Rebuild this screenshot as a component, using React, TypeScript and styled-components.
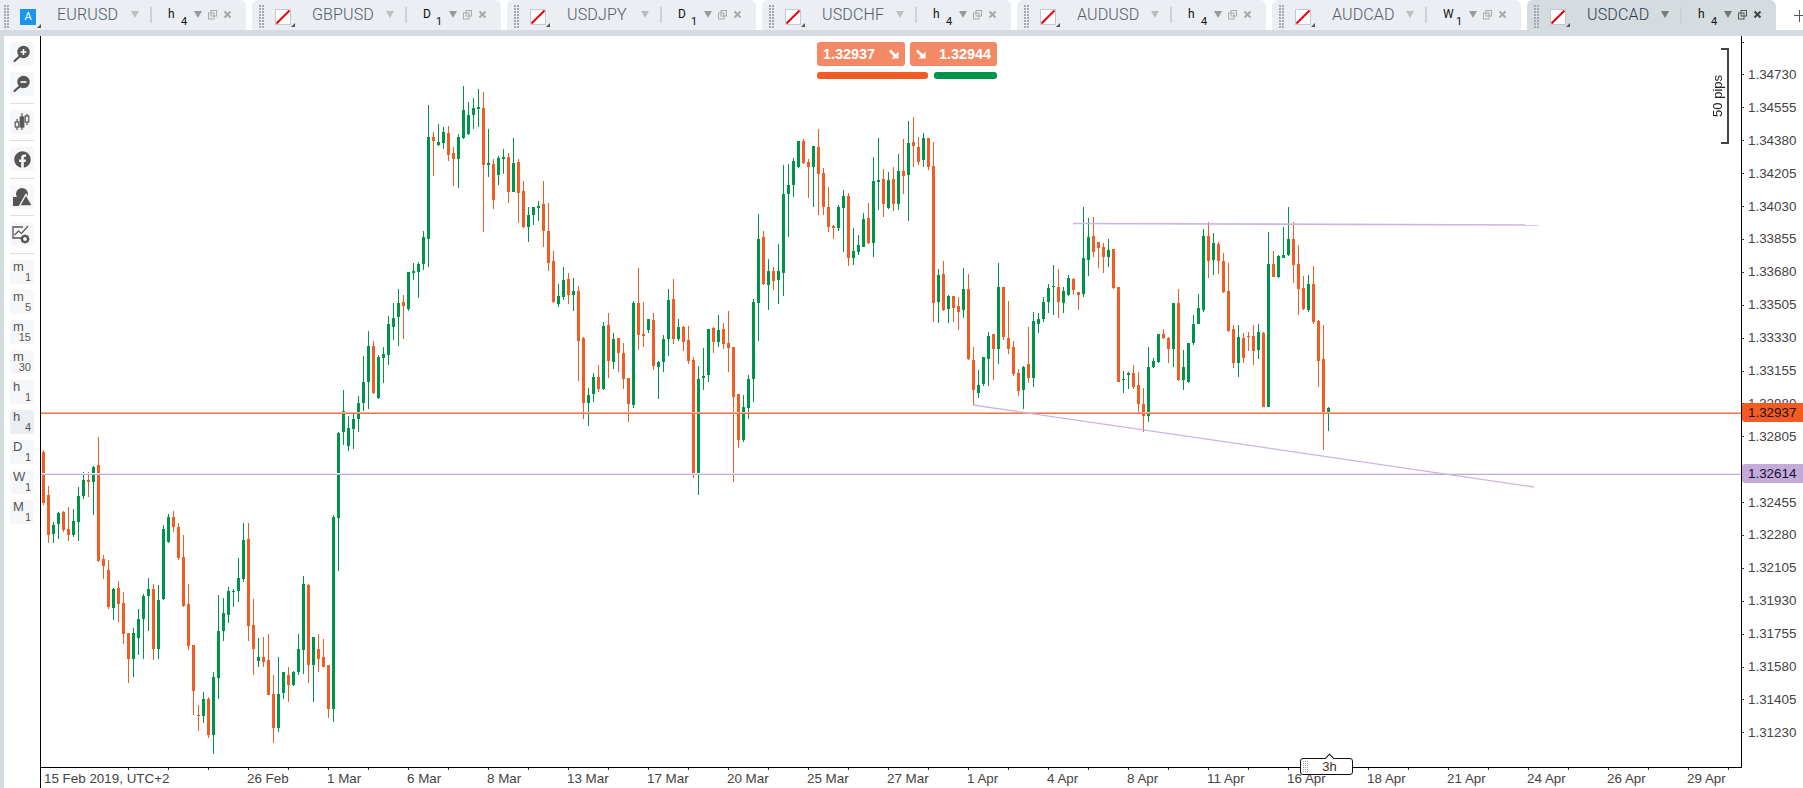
import React from 'react';
import styled, { createGlobalStyle } from 'styled-components';
import { FaFacebook } from 'react-icons/fa';

const BAND = '#d5dce0';
const ORANGE = '#f25c24';
const GREEN = '#00944a';
const AXIS_FONT = `"Liberation Sans", Arial, sans-serif`;

const Global = createGlobalStyle`
  html, body { margin: 0; padding: 0; background: #fff; overflow: hidden; }
  #root { width: 1803px; height: 788px; overflow: hidden; }
`;

const Page = styled.div`
  width: 1803px;
  height: 788px;
  display: flex;
  flex-direction: column;
  overflow: hidden;
  font-family: ${AXIS_FONT};
`;

const TabBar = styled.div`
  height: 30px;
  display: flex;
  gap: 6px;
  margin-left: -3px;
  flex: none;
`;

const Tab = styled.div<{ $active?: boolean }>`
  width: 249px;
  height: 30px;
  flex: none;
  box-sizing: border-box;
  padding-left: 7px;
  display: flex;
  align-items: center;
  border-radius: 6px 6px 0 0;
  background: ${p => (p.$active ? BAND : '#ebeef2')};
`;

const Grip = styled.div`
  width: 5px;
  height: 24px;
  margin-top: 4px;
  background: repeating-linear-gradient(to bottom, #a3a9ae 0 2px, transparent 2px 3px);
  mask: repeating-linear-gradient(90deg, #000 0 2px, transparent 2px 3px);
  -webkit-mask: repeating-linear-gradient(90deg, #000 0 2px, transparent 2px 3px);
`;

const SymbolBox = styled.div<{ $blue?: boolean }>`
  position: relative;
  width: 16px;
  height: 16px;
  margin: 3px 0 0 11px;
  box-sizing: border-box;
  background: ${p => (p.$blue ? '#1a95ec' : '#fff')};
  border: ${p => (p.$blue ? 'none' : '1px solid #c6c9cc')};
  color: #fff;
  font: 11px/16px Roboto, sans-serif;
  text-align: center;
  &::after {
    content: '';
    position: absolute;
    right: -5px;
    bottom: -3px;
    border-style: solid;
    border-width: 0 0 4px 4px;
    border-color: transparent transparent #555 transparent;
  }
`;

const SymbolName = styled.div<{ $active?: boolean }>`
  width: 74px;
  margin-left: 21px;
  font: 300 16px/30px Roboto, sans-serif;
  letter-spacing: 0.15px;
  color: ${p => (p.$active ? '#2f3b4c' : '#505a68')};
  white-space: nowrap;
`;

const Caret = styled.div<{ $shade: string }>`
  flex: none;
  width: 0;
  height: 0;
  margin-top: -1px;
  border-style: solid;
  border-width: 7px 4px 0 4px;
  border-color: ${p => p.$shade} transparent transparent transparent;
`;

const TabDivider = styled.div`
  width: 2px;
  height: 16px;
  margin-left: 11px;
  background: #cfd2d5;
`;

const TfLabel = styled.div`
  position: relative;
  width: 26px;
  height: 30px;
  margin-left: 16px;
  color: #111;
  font: 12px/14px Roboto, sans-serif;
`;

const TfUnit = styled.span`
  position: absolute;
  left: 0;
  top: 7px;
`;

const TfCount = styled.span`
  position: absolute;
  left: 13px;
  top: 15px;
  font-size: 11px;
`;

const TabIcons = styled.svg`
  flex: none;
  margin-left: 6px;
  margin-top: -1px;
`;

const AddTab = styled.div`
  position: absolute;
  left: 1794px;
  top: 10px;
  width: 12px;
  height: 12px;
  background:
    linear-gradient(#555, #555) 0 5px / 100% 1px no-repeat,
    linear-gradient(#555, #555) 5px 0 / 1px 100% no-repeat;
`;

const Band = styled.div`
  height: 6px;
  flex: none;
  background: ${BAND};
`;

const Main = styled.div`
  flex: 1;
  display: flex;
  min-height: 0;
`;

const Sidebar = styled.aside`
  width: 40px;
  flex: none;
  box-sizing: border-box;
  border-left: 4px solid ${BAND};
  padding: 6px 0 0 6px;
  display: flex;
  flex-direction: column;
  gap: 6px;
`;

const ToolButton = styled.div<{ $active?: boolean }>`
  position: relative;
  width: 24px;
  height: 24px;
  flex: none;
  border-radius: 3px;
  background: ${p => (p.$active ? '#eceff1' : '#f6f7f8')};
  display: flex;
  align-items: center;
  justify-content: center;
  color: #555;
`;

const ToolRule = styled.div<{ $push?: boolean }>`
  width: 24px;
  height: 1px;
  flex: none;
  margin-top: ${p => (p.$push ? 1 : 0)}px;
  background: #dcdfe1;
`;

const TfUnitSmall = styled.span`
  position: absolute;
  left: 3px;
  top: 1px;
  font: 13px/12px "Liberation Sans", sans-serif;
  color: #555;
`;

const TfCountSmall = styled.span`
  position: absolute;
  right: 3px;
  top: 11px;
  font: 11px/12px "Liberation Sans", sans-serif;
  color: #555;
`;

const Chart = styled.div`
  position: relative;
  flex: none;
  width: 1763px;
  box-sizing: border-box;
  display: grid;
  grid-template-columns: 1700px 62px;
  grid-template-rows: 731px 21px;
  border-left: 1px solid #000;
`;

const Plot = styled.svg`
  display: block;
  grid-column: 1;
  grid-row: 1;
`;

const PriceAxis = styled.div`
  grid-column: 2;
  grid-row: 1;
  position: relative;
  box-sizing: border-box;
  border-left: 1px solid #000;
  overflow: hidden;
  font: 13.4px/16px ${AXIS_FONT};
  color: #444;
  display: flex;
  flex-direction: column;
`;

const PriceList = styled.div`
  margin-top: -10.35px;
  flex: none;
`;

const PriceRow = styled.div`
  height: 32.9px;
  display: flex;
  align-items: center;
  gap: 4px;
  white-space: nowrap;
  &::before {
    content: '';
    width: 2px;
    height: 1px;
    background: #333;
    flex: none;
  }
`;

const PriceTag = styled.div<{ $bg: string; $top: number; $ink: string }>`
  position: absolute;
  left: 0;
  right: 0;
  top: ${p => p.$top}px;
  height: 19px;
  box-sizing: border-box;
  padding-left: 6px;
  border-radius: 3px 0 0 3px;
  background: ${p => p.$bg};
  color: ${p => p.$ink};
  line-height: 19px;
`;

const TimeAxis = styled.div`
  grid-column: 1 / 2;
  grid-row: 2;
  position: relative;
  border-top: 1px solid #000;
  margin-right: -1px;
  display: flex;
  padding-left: 3px;
  font: 13.4px/21px ${AXIS_FONT};
  color: #444;
  white-space: nowrap;
`;

const TimeTicks = styled.div`
  position: absolute;
  left: 87px;
  right: 0;
  top: 0;
  height: 2px;
  background: repeating-linear-gradient(90deg, #333 0 1px, transparent 1px 40px);
`;

const TimeCell = styled.div<{ $first?: boolean }>`
  flex: none;
  width: ${p => (p.$first ? 203 : 80)}px;
  &:last-child {
    width: auto;
  }
`;

const Quote = styled.div`
  position: absolute;
  left: 776px;
  top: 6px;
  width: 180px;
  display: flex;
  flex-direction: column;
  gap: 6px;
`;

const QuoteRow = styled.div`
  display: flex;
  gap: 5px;
`;

const QuoteButton = styled.div`
  flex: 1;
  height: 24px;
  box-sizing: border-box;
  padding: 0 6px;
  border-radius: 3px;
  background: #f48a65;
  color: #fff;
  font: bold 14.4px/24px ${AXIS_FONT};
  display: flex;
  align-items: center;
  justify-content: space-between;
`;

const SpreadRow = styled.div`
  display: flex;
  gap: 6px;
  height: 7px;
`;

const SpreadBar = styled.div<{ $bg: string; $w: number }>`
  width: ${p => p.$w}px;
  border-radius: 3px;
  background: ${p => p.$bg};
`;

const PipRuler = styled.div`
  position: absolute;
  right: 74px;
  top: 13px;
  height: 94px;
  display: flex;
  align-items: center;
`;

const PipText = styled.div`
  writing-mode: vertical-rl;
  transform: rotate(180deg);
  margin-right: -4px;
  font: 13px/14px ${AXIS_FONT};
  color: #222;
`;

const PipBracket = styled.div`
  width: 6px;
  height: 92px;
  border: 2px solid #444;
  border-left: none;
`;

const Timer = styled.div`
  position: absolute;
  left: 1259px;
  top: 722px;
  width: 53px;
  height: 17px;
  box-sizing: border-box;
  padding-left: 6px;
  background: #fff;
  border: 1px solid #111;
  border-radius: 3px;
  font: 13px/15px ${AXIS_FONT};
  color: #4a2a10;
  text-align: center;
  &::before {
    content: '';
    position: absolute;
    left: 25px;
    top: -4px;
    width: 6px;
    height: 6px;
    background: #fff;
    border-left: 1px solid #111;
    border-top: 1px solid #111;
    transform: rotate(45deg);
  }
`;

const TimerGrip = styled.div`
  position: absolute;
  left: 2px;
  top: 2px;
  width: 5px;
  height: 11px;
  background: repeating-linear-gradient(to bottom, #999 0 1px, transparent 1px 2px);
  mask: repeating-linear-gradient(90deg, #000 0 1px, transparent 1px 2px);
  -webkit-mask: repeating-linear-gradient(90deg, #000 0 1px, transparent 1px 2px);
`;

const TimerText = styled.span`
  position: relative;
`;

/* ---------- data ---------- */
type C = [number, number, number, number, number]; // colour (1 orange), high, body top, body bottom, low

const seg1: C[] = [
  [1,90,97,250,255],[1,198,224,344,368],[0,307,314,341,370],[0,275,278,313,358],[1,272,275,331,335],[1,262,327,344,364],
  [0,267,303,344,350],[0,201,227,307,364],[0,156,180,227,238],[1,156,180,185,232],[0,139,140,187,286],[1,50,134,423,427],
  [1,405,417,437,478],[1,420,450,561,566],[0,505,506,563,601],[1,484,504,552,607],[1,517,549,641,673],[1,640,640,716,790],
  [0,625,640,716,772],[0,568,598,653,706],[0,522,528,596,718],[0,475,507,527,634],[1,492,507,686,721],[0,495,541,686,718],
  [0,316,327,538,540],[0,282,291,367,368],[1,273,291,322,337],[1,310,321,414,420],[1,345,411,557,562],[1,492,552,677,690],
  [1,676,676,812,884],[1,855,885,888,932],[0,817,838,887,910],[1,832,838,945,955],[0,755,771,945,1003],[0,525,634,773,838],
  [0,535,579,632,664],[0,502,514,584,610],[0,506,513,517,562],[0,414,475,513,547],[0,309,360,476,487],[1,309,357,617,664],
  [1,538,615,687,764],[0,655,712,722,740],[1,652,712,725,740],[1,643,720,824,826],[1,766,823,923,970],[0,712,823,923,935],
  [0,756,757,818,838],[1,742,765,794,845],[0,752,756,795,797],[0,643,687,755,765],[0,468,492,689,762],[1,492,494,735,790],
  [0,650,651,735,847],[1,643,687,717,757],[1,658,711,740,742],[1,735,735,866,895],[0,285,291,866,907],[0,37,38,295,453],
];
const seg2: C[] = [
  [0,960,1022,1087,1125],[0,1038,1073,1128,1143],[0,1028,1048,1076,1138],[0,977,1000,1048,1086],[0,857,935,999,1024],
  [0,782,829,936,1018],[1,812,829,968,972],[0,855,862,985,988],[0,830,853,864,940],[0,737,763,855,886],[0,698,745,771,810],
  [0,656,700,741,828],[1,674,697,708,806],[0,605,606,718,722],[0,578,604,609,630],[0,575,583,606,684],[0,482,502,582,600],
  [0,106,202,506,590],[1,187,202,213,317],[0,163,217,225,228],[0,172,187,219,236],[1,167,190,254,272],[1,230,250,267,347],
  [0,192,202,266,353],[0,49,120,204,206],[0,95,136,192,194],[0,85,114,135,176],[0,56,111,116,172],[1,65,114,285,485],
  [0,176,280,285,320],[1,268,282,389,416],[0,258,264,315,344],[0,236,262,266,312],[1,248,262,366,398],[0,205,280,366,366],
  [1,268,277,369,458],[1,332,364,470,473],[0,412,436,471,516],[0,412,412,435,464],[0,394,408,414,452],[1,332,403,483,530],
  [1,398,484,579,603],[1,542,574,696,700],[0,641,679,702,710],[0,592,631,681,690],[1,608,628,675,702],[0,624,664,675,722],
  [1,648,664,813,932],[1,800,805,1000,1047],[0,955,974,1000,1068],[0,908,920,973,996],[1,884,922,958,965],[0,756,767,958,960],
  [1,728,764,873,925],[0,788,806,877,897],[1,803,805,850,906],[1,818,848,928,957],[1,925,925,1003,1055],[0,692,700,1005,1014],
  [1,593,700,795,840],[1,695,793,799,832],[0,746,748,781,788],[1,728,749,889,900],[0,873,875,892,987],
];
const seg3: C[] = [
  [0,704,718,787,816],[0,568,601,718,768],[1,536,598,718,733],[0,656,680,716,724],[1,677,680,726,753],[1,677,719,784,792],
  [1,770,779,1121,1135],[0,797,838,1118,1185],[0,745,827,835,871],[0,687,688,825,847],[1,680,685,727,760],[0,646,691,727,742],
  [1,668,687,733,747],[1,634,730,745,816],[1,741,742,892,1147],[1,882,883,1021,1045],[0,885,922,1021,1025],[0,825,838,925,957],
  [0,596,607,837,906],[0,341,418,608,722],[1,394,412,553,556],[0,476,514,555,630],[1,500,514,543,570],[0,431,514,541,612],
  [0,194,283,519,588],[0,193,256,282,410],[0,175,183,256,291],[0,124,124,202,205],[1,118,124,189,192],[1,176,186,201,294],
  [0,137,138,201,320],[1,88,141,222,344],[1,205,219,321,344],[1,260,322,380,396],[1,375,378,384,416],[0,314,322,385,392],
  [0,271,289,323,455],[1,278,289,474,497],[0,385,454,474,494],[0,406,436,457,465],[0,340,358,440,441],[1,310,355,430,431],
  [0,172,244,429,470],[0,115,240,246,329],[1,208,238,312,350],[0,217,241,324,327],[1,202,238,312,332],[0,163,214,312,330],
  [1,118,214,228,281],[0,64,130,224,362],[1,52,127,138,200],[1,110,142,186,195],[0,100,114,180,200],[1,113,115,202,210],
  [1,127,199,608,667],[0,506,526,606,668],[1,484,523,630,632],[0,585,589,627,670],[1,588,589,624,667],[1,592,619,636,690],
  [0,503,566,630,655],[1,523,566,778,780],[1,740,779,871,915],[0,810,854,878,895],[0,770,772,853,857],[0,695,707,777,858],
];
const seg4: C[] = [
  [1,432,433,478,570],[0,218,292,478,522],[1,290,292,442,450],[1,332,443,478,493],[1,452,472,551,558],[1,538,548,604,618],
  [0,528,530,601,658],[1,410,523,565,578],[0,365,392,565,592],[0,370,386,403,430],[0,322,337,388,396],[0,283,295,337,370],
  [0,224,289,291,376],[1,236,290,337,383],[0,290,304,340,370],[0,255,263,316,318],[1,265,266,300,316],[1,305,305,316,360],
  [0,52,205,313,320],[0,85,142,210,258],[1,82,139,186,200],[1,155,156,175,233],[1,158,172,201,250],[0,148,181,201,232],
  [1,178,178,295,296],[1,292,292,575,575],[0,542,566,571,610],[0,546,548,556,598],[1,524,548,590,596],[1,546,584,642,672],
  [1,594,641,677,725],[0,470,530,677,696],[0,505,512,532,535],[0,433,433,517,518],[1,418,431,444,446],[1,440,445,478,520],
  [0,340,340,478,532],[1,296,340,570,573],[0,480,532,570,600],[0,458,460,577,578],[0,375,403,460,466],[0,312,355,403,403],
  [0,116,139,361,366],[1,95,139,213,263],[0,130,160,211,255],[1,155,163,212,252],[1,188,214,306,308],[1,218,304,424,426],
  [1,405,418,520,535],[0,405,442,520,562],[1,430,443,505,520],[1,425,439,442,482],[1,405,439,484,525],[0,402,427,480,507],
  [1,427,428,650,650],[0,125,223,652,652],[1,182,223,260,262],[0,195,199,262,265],[0,112,196,203,205],[0,52,148,195,198],
  [1,97,148,225,278],[1,165,223,297,375],[1,257,295,358,360],[0,255,283,361,365],[1,227,283,397,402],[1,390,393,514,590],
  [1,405,508,673,780],[0,652,655,670,723],
];

const segments: [number, C[]][] = [[420, seg1], [70, seg2], [100, seg3], [190, seg4]];
const candles = segments.flatMap(([base, list]) =>
  list.map(([c, h, t, b, l]) => ({
    up: c === 0,
    high: Math.round(base + h / 3),
    top: Math.round(base + t / 3),
    bottom: Math.round(base + b / 3),
    low: Math.round(base + l / 3),
  })),
);

const prices = ['', ...Array.from({ length: 21 }, (_, i) => (1.3473 - 0.00175 * i).toFixed(5))];
const dates = ['26 Feb','1 Mar','6 Mar','8 Mar','13 Mar','17 Mar','20 Mar','25 Mar','27 Mar','1 Apr','4 Apr','8 Apr','11 Apr','16 Apr','18 Apr','21 Apr','24 Apr','26 Apr','29 Apr'];
const tabs = [
  { name: 'EURUSD', unit: 'h', count: '4', blue: true },
  { name: 'GBPUSD', unit: 'D', count: '1' },
  { name: 'USDJPY', unit: 'D', count: '1' },
  { name: 'USDCHF', unit: 'h', count: '4' },
  { name: 'AUDUSD', unit: 'h', count: '4' },
  { name: 'AUDCAD', unit: 'W', count: '1' },
  { name: 'USDCAD', unit: 'h', count: '4', active: true },
];
const frames = [['m','1'],['m','5'],['m','15'],['m','30'],['h','1'],['h','4'],['D','1'],['W','1'],['M','1']];

/* ---------- drawings ---------- */
const Slash = () => (
  <svg width="14" height="14" viewBox="0 0 14 14" style={{ display: 'block' }}>
    <line x1="0.5" y1="13.5" x2="13.5" y2="0.5" stroke="#f0000e" strokeWidth="2" />
  </svg>
);

const WindowIcons = ({ shade, cross }: { shade: string; cross: string }) => (
  <TabIcons width="24" height="10" viewBox="0 0 24 10">
    <rect x="3" y="0.5" width="5.5" height="5.5" fill="none" stroke={shade} />
    <rect x="0.5" y="3" width="5.5" height="6" fill="none" stroke={shade} />
    <path d="M16.5 1.5l6 6M22.5 1.5l-6 6" stroke={cross} strokeWidth="2" />
  </TabIcons>
);

const Zoom = ({ plus }: { plus?: boolean }) => (
  <svg width="24" height="24" viewBox="0 0 24 24">
    <circle cx="13.5" cy="10" r="6.2" fill="#555" />
    <path d="M9.5 14.5L4.5 19" stroke="#555" strokeWidth="2.2" strokeLinecap="round" />
    <path d={plus ? 'M10.5 10h6M13.5 7v6' : 'M10.5 10h6'} stroke="#fff" strokeWidth="1.6" />
  </svg>
);

const CandleIcon = () => (
  <svg width="24" height="24" viewBox="0 0 24 24" fill="none" stroke="#555" strokeWidth="1.2">
    <path d="M7 9v11M12 3v17M17 4v11" />
    <rect x="5.2" y="12" width="3.6" height="5" fill="#eee" />
    <rect x="10.2" y="7" width="3.6" height="10" fill="#555" />
    <rect x="15.2" y="6" width="3.6" height="6" fill="#eee" />
  </svg>
);

const ShapesIcon = () => (
  <svg width="24" height="24" viewBox="0 0 24 24">
    <circle cx="12" cy="9" r="6" fill="#555" />
    <rect x="3" y="12" width="12" height="9" fill="#555" />
    <path d="M9.5 21L16 9.5L22.5 21Z" fill="#555" stroke="#f6f7f8" strokeWidth="1.4" />
  </svg>
);

const SettingsIcon = () => (
  <svg width="24" height="24" viewBox="0 0 24 24" fill="none">
    <path d="M13 5H3v11h8" stroke="#555" strokeWidth="1.3" />
    <path d="M4.5 13l4-4 3 2.5L18 4" stroke="#555" strokeWidth="1.2" />
    <circle cx="15" cy="17" r="3" stroke="#555" strokeWidth="2.2" />
    <path d="M15 12.5v2M15 19.5v2M10.5 17h2M17.5 17h2M11.8 13.8l1.4 1.4M16.8 18.8l1.4 1.4M18.2 13.8l-1.4 1.4M13.2 18.8l-1.4 1.4" stroke="#555" strokeWidth="1.3" />
  </svg>
);

const QuoteArrow = () => (
  <svg width="10" height="10" viewBox="0 0 10 10">
    <path d="M1 1.5L7 7.5" stroke="#fff" strokeWidth="2.6" />
    <path d="M9.5 2.5v7H2.5Z" fill="#fff" />
  </svg>
);

export default function App() {
  return (
    <Page>
      <Global />
      <TabBar>
        {tabs.map(t => (
          <Tab key={t.name} $active={t.active}>
            <Grip />
            <SymbolBox $blue={t.blue}>{t.blue ? 'A' : <Slash />}</SymbolBox>
            <SymbolName $active={t.active}>{t.name}</SymbolName>
            <Caret $shade={t.active ? '#777' : '#bcbfc2'} />
            <TabDivider />
            <TfLabel>
              <TfUnit>{t.unit}</TfUnit>
              <TfCount>{t.count}</TfCount>
            </TfLabel>
            <Caret $shade={t.active ? '#777' : '#989b9e'} />
            <WindowIcons shade={t.active ? '#555' : '#aaa'} cross={t.active ? '#444' : '#a8a8a8'} />
          </Tab>
        ))}
      </TabBar>
      <AddTab />
      <Band />
      <Main>
        <Sidebar>
          <ToolButton><Zoom plus /></ToolButton>
          <ToolButton><Zoom /></ToolButton>
          <ToolRule $push />
          <ToolButton><CandleIcon /></ToolButton>
          <ToolRule />
          <ToolButton><FaFacebook size={17} /></ToolButton>
          <ToolRule $push />
          <ToolButton><ShapesIcon /></ToolButton>
          <ToolRule />
          <ToolButton><SettingsIcon /></ToolButton>
          <ToolRule $push />
          {frames.map(([u, n]) => (
            <ToolButton key={u + n} $active={u === 'h' && n === '4'}>
              <TfUnitSmall>{u}</TfUnitSmall>
              <TfCountSmall>{n}</TfCountSmall>
            </ToolButton>
          ))}
        </Sidebar>
        <Chart>
          <Plot width="1700" height="731" viewBox="41 36 1700 731" shapeRendering="crispEdges">
            {candles.map((c, i) => (
              <g key={i} fill={c.up ? GREEN : ORANGE}>
                <rect x={43 + 5 * i} y={c.high} width="1" height={Math.max(1, c.low - c.high)} />
                <rect x={42 + 5 * i} y={c.top} width="3" height={Math.max(1, c.bottom - c.top)} />
              </g>
            ))}
            <rect x="41" y="412" width="1700" height="1" fill="#f6b39b" />
            <rect x="41" y="413" width="1700" height="1" fill="#f0794c" />
            <rect x="41" y="473" width="1700" height="1" fill="#eee6f5" />
            <rect x="41" y="474" width="1700" height="1" fill="#c4abde" />
            <g shapeRendering="geometricPrecision" stroke="#cbb5e0" fill="none">
              <line x1="1073" y1="223.5" x2="1538" y2="225" strokeWidth="1.6" />
              <line x1="973" y1="405" x2="1534" y2="487" strokeWidth="1.3" />
            </g>
          </Plot>
          <PriceAxis>
            <PriceList>
              {prices.map((p, i) => (
                <PriceRow key={i}>{p}</PriceRow>
              ))}
            </PriceList>
            <PriceTag $bg={ORANGE} $ink="#1a1008" $top={367}>1.32937</PriceTag>
            <PriceTag $bg="#c4aad9" $ink="#101030" $top={428}>1.32614</PriceTag>
          </PriceAxis>
          <TimeAxis>
            <TimeTicks />
            <TimeCell $first>15 Feb 2019, UTC+2</TimeCell>
            {dates.map(d => (
              <TimeCell key={d}>{d}</TimeCell>
            ))}
          </TimeAxis>
          <Quote>
            <QuoteRow>
              <QuoteButton>1.32937<QuoteArrow /></QuoteButton>
              <QuoteButton><QuoteArrow />1.32944</QuoteButton>
            </QuoteRow>
            <SpreadRow>
              <SpreadBar $bg={ORANGE} $w={111} />
              <SpreadBar $bg={GREEN} $w={63} />
            </SpreadRow>
          </Quote>
          <PipRuler>
            <PipText>50 pips</PipText>
            <PipBracket />
          </PipRuler>
          <Timer>
            <TimerGrip />
            <TimerText>3h</TimerText>
          </Timer>
        </Chart>
      </Main>
    </Page>
  );
}
